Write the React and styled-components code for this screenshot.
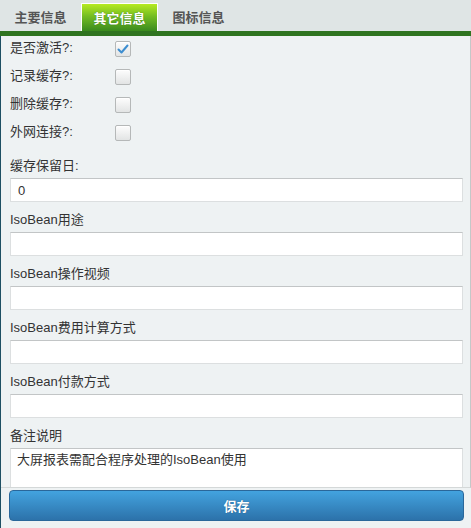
import React, { useState } from 'react';
import styled, { createGlobalStyle } from 'styled-components';

const GlobalStyle = createGlobalStyle`
  html, body {
    margin: 0;
    padding: 0;
    background: #eef2f3;
  }
  body {
    font-family: "Liberation Sans", "Noto Sans CJK SC", sans-serif;
    font-size: 13px;
    color: #333;
  }
`;

// Styles
const Page = styled.div`
  width: 471px;
  height: 528px;
  display: flex;
  flex-direction: column;
  overflow: hidden;
  background: #eef2f3;
`;

const TabBar = styled.div`
  height: 31px;
  display: flex;
  align-items: flex-end;
  gap: 2px;
  padding-left: 2px;
  background: #dfe5e5;
  border-bottom: 5px solid #2f7420;
`;

const Tab = styled.div`
  width: 77px;
  height: ${(p) => (p.$active ? '28px' : '30px')};
  display: flex;
  align-items: center;
  justify-content: center;
  box-sizing: border-box;
  font-weight: bold;
  font-size: 13px;
  color: ${(p) => (p.$active ? '#fff' : '#555')};
  background: ${(p) =>
    p.$active ? 'linear-gradient(to bottom, #b6ea22 0%, #74bd22 45%, #3a8a1e 100%)' : 'transparent'};
  border: ${(p) => (p.$active ? '1px solid #fff' : 'none')};
  border-bottom: none;
  text-shadow: ${(p) => (p.$active ? '0 0 1px #2d6a10' : 'none')};
  cursor: pointer;
`;

const Body = styled.div`
  flex: 1;
  display: flex;
  flex-direction: column;
  border-left: 1px solid #1d4f63;
`;

const Panel = styled.div`
  height: 452px;
  box-sizing: border-box;
  padding: 0 7px 0 9px;
  border-right: 1px solid #c4c8c8;
  border-bottom: 1px solid #d4d8d8;
  overflow: hidden;
  display: flex;
  flex-direction: column;
`;

const CheckRow = styled.label`
  height: 24px;
  margin-bottom: 4px;
  display: flex;
  align-items: center;
`;

const CheckLabel = styled.span`
  width: 105px;
  line-height: 24px;
`;

const Box = styled.span`
  width: 14px;
  height: 14px;
  display: flex;
  align-items: center;
  justify-content: center;
  border: 1px solid #b5b8b8;
  border-radius: 2px;
  background: linear-gradient(to bottom, #fdfdfd, #e2e4e4);
  box-shadow: inset 0 1px 0 #fff;
  margin-top: 2px;
`;

const Field = styled.div`
  display: flex;
  flex-direction: column;
`;

const FieldLabel = styled.div`
  padding-top: 8px;
  line-height: 20px;
  margin-bottom: 2px;
`;

const Input = styled.input`
  height: 24px;
  box-sizing: border-box;
  margin: 0;
  padding: 0 7px;
  border: 1px solid #dcdfe0;
  border-top-color: #c2c5c6;
  background: #fff;
  font-family: "Liberation Sans", "Noto Sans CJK SC", sans-serif;
  font-size: 13px;
  color: #333;
  outline: none;
`;

const TextArea = styled.textarea`
  height: 46px;
  box-sizing: border-box;
  margin: 0;
  padding: 2px 6px;
  border: 1px solid #dcdfe0;
  border-top-color: #c2c5c6;
  background: #fff;
  font-family: "Liberation Sans", "Noto Sans CJK SC", sans-serif;
  font-size: 13px;
  line-height: 18px;
  color: #333;
  resize: none;
  outline: none;
`;

const Footer = styled.div`
  padding: 2px 7px 0 8px;
`;

const SaveButton = styled.button`
  width: 100%;
  height: 31px;
  border: 1px solid #2a679a;
  border-radius: 4px;
  background: linear-gradient(to bottom, #43a3df, #2c72aa);
  color: #fff;
  font-family: "Liberation Sans", "Noto Sans CJK SC", sans-serif;
  font-size: 13px;
  font-weight: bold;
  text-shadow: 0 0 1px #1d4f7a;
  cursor: pointer;
`;

// Components
const Check = ({ checked }) => (
  <Box>
    {checked && (
      <svg width="12" height="10" viewBox="0 0 12 10">
        <path d="M1.5 5.5 L4.5 8.5 L10.5 1.5" fill="none" stroke="#3d8ed0" strokeWidth="2" strokeLinecap="round" strokeLinejoin="round" />
      </svg>
    )}
  </Box>
);

const checks = [
  { label: '是否激活?:', checked: true },
  { label: '记录缓存?:', checked: false },
  { label: '删除缓存?:', checked: false },
  { label: '外网连接?:', checked: false },
];

const fields = [
  { label: '缓存保留日:', value: '0' },
  { label: 'IsoBean用途', value: '' },
  { label: 'IsoBean操作视频', value: '' },
  { label: 'IsoBean费用计算方式', value: '' },
  { label: 'IsoBean付款方式', value: '' },
];

const tabs = ['主要信息', '其它信息', '图标信息'];

const App = () => {
  const [active, setActive] = useState(1);
  return (
    <Page>
      <GlobalStyle />
      <TabBar>
        {tabs.map((t, i) => (
          <Tab key={t} $active={i === active} onClick={() => setActive(i)}>
            {t}
          </Tab>
        ))}
      </TabBar>
      <Body>
        <Panel>
          {checks.map((c) => (
            <CheckRow key={c.label}>
              <CheckLabel>{c.label}</CheckLabel>
              <Check checked={c.checked} />
            </CheckRow>
          ))}
          {fields.map((f) => (
            <Field key={f.label}>
              <FieldLabel>{f.label}</FieldLabel>
              <Input defaultValue={f.value} />
            </Field>
          ))}
          <Field>
            <FieldLabel>备注说明</FieldLabel>
            <TextArea defaultValue="大屏报表需配合程序处理的IsoBean使用" />
          </Field>
        </Panel>
        <Footer>
          <SaveButton>保存</SaveButton>
        </Footer>
      </Body>
    </Page>
  );
};

export default App;
